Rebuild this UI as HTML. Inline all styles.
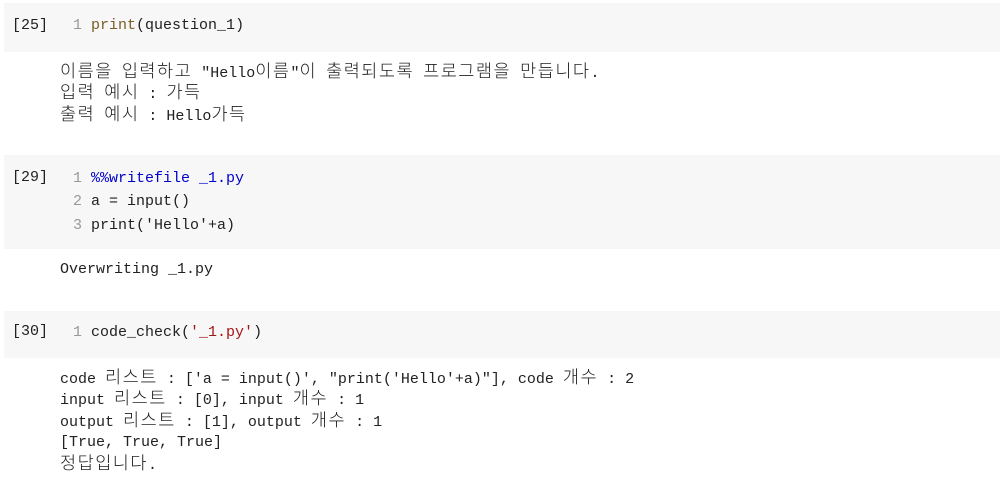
<!DOCTYPE html>
<html><head><meta charset="utf-8"><style>
body{margin:0;width:1000px;height:489px;background:#fff;position:relative;overflow:hidden;font-family:"Liberation Mono","Noto Sans CJK KR",monospace;font-size:15px;color:#212121}
.cell{position:absolute;left:4px;right:0;background:#f7f7f7}
.t{position:absolute;white-space:pre;line-height:20px}
.n{color:#999}
.p{color:#795e26}.b{color:#0000cc}.s{color:#a31515}
.k{font-size:17.5px;letter-spacing:1.5px;font-weight:300;line-height:20px}
</style></head><body>
<div class="cell" style="top:3px;height:49px"></div>
<div class="cell" style="top:155px;height:94px"></div>
<div class="cell" style="top:311px;height:47px"></div>

<div class="t" style="left:12px;top:16px">[25]</div>
<div class="t" style="left:73px;top:16px"><span class="n">1</span> <span class="p">print</span>(question_1)</div>
<div class="t" style="left:60px;top:63px"><span class="k">이름을</span> <span class="k">입력하고</span> "Hello<span class="k">이름</span>"<span class="k">이</span> <span class="k">출력되도록</span> <span class="k">프로그램을</span> <span class="k">만듭니다</span>.</div>
<div class="t" style="left:60px;top:84px"><span class="k">입력</span> <span class="k">예시</span> : <span class="k">가득</span></div>
<div class="t" style="left:60px;top:106px"><span class="k">출력</span> <span class="k">예시</span> : Hello<span class="k">가득</span></div>

<div class="t" style="left:12px;top:168px">[29]</div>
<div class="t" style="left:73px;top:169px"><span class="n">1</span> <span class="b">%%writefile _1.py</span></div>
<div class="t" style="left:73px;top:192px"><span class="n">2</span> a = input()</div>
<div class="t" style="left:73px;top:216px"><span class="n">3</span> print('Hello'+a)</div>
<div class="t" style="left:60px;top:260px">Overwriting _1.py</div>

<div class="t" style="left:12px;top:322px">[30]</div>
<div class="t" style="left:73px;top:323px"><span class="n">1</span> code_check(<span class="s">'_1.py'</span>)</div>
<div class="t" style="left:60px;top:369px">code <span class="k">리스트</span> : ['a = input()', "print('Hello'+a)"], code <span class="k">개수</span> : 2</div>
<div class="t" style="left:60px;top:390px">input <span class="k">리스트</span> : [0], input <span class="k">개수</span> : 1</div>
<div class="t" style="left:60px;top:412px">output <span class="k">리스트</span> : [1], output <span class="k">개수</span> : 1</div>
<div class="t" style="left:60px;top:433px">[True, True, True]</div>
<div class="t" style="left:60px;top:455px"><span class="k">정답입니다</span>.</div>
</body></html>
